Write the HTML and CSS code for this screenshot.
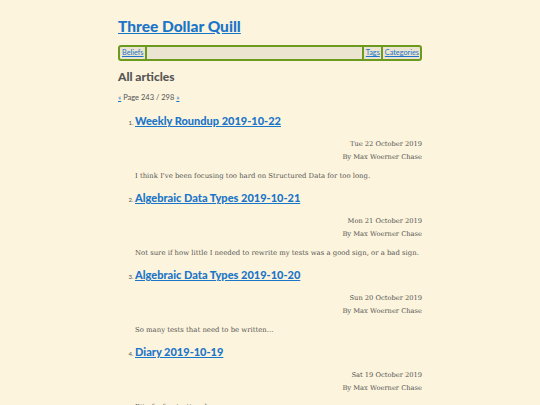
FILE: index.html
```
<!DOCTYPE html>
<html>
<head>
<meta charset="utf-8">
<link rel="stylesheet" href="styles.css">
</head>
<body>
<div class="page">
  <h1 class="site-title"><a href="#">Three Dollar Quill</a></h1>
  <nav class="nav">
    <div class="nav-left"><a href="#" class="nav-item sep-right">Beliefs</a></div>
    <div class="nav-right"><a href="#" class="nav-item sep-left">Tags</a><a href="#" class="nav-item sep-left">Categories</a></div>
  </nav>
  <h2 class="section-title">All articles</h2>
  <p class="pager"><a href="#">«</a> Page 243 / 298 <a href="#">»</a></p>
  <ol class="articles" start="1">
    <li class="article">
      <h3 class="article-title"><a href="#">Weekly Roundup 2019-10-22</a></h3>
      <div class="meta"><div>Tue 22 October 2019</div><div>By Max Woerner Chase</div></div>
      <p class="summary">I think I've been focusing too hard on Structured Data for too long.</p>
    </li>
    <li class="article">
      <h3 class="article-title"><a href="#">Algebraic Data Types 2019-10-21</a></h3>
      <div class="meta"><div>Mon 21 October 2019</div><div>By Max Woerner Chase</div></div>
      <p class="summary">Not sure if how little I needed to rewrite my tests was a good sign, or a bad sign.</p>
    </li>
    <li class="article">
      <h3 class="article-title"><a href="#">Algebraic Data Types 2019-10-20</a></h3>
      <div class="meta"><div>Sun 20 October 2019</div><div>By Max Woerner Chase</div></div>
      <p class="summary">So many tests that need to be written...</p>
    </li>
    <li class="article">
      <h3 class="article-title"><a href="#">Diary 2019-10-19</a></h3>
      <div class="meta"><div>Sat 19 October 2019</div><div>By Max Woerner Chase</div></div>
      <p class="summary">Bit of a frustrating day.</p>
    </li>
  </ol>
</div>
</body>
</html>
```
FILE: styles.css
```
html, body {
  margin: 0;
  padding: 0;
  background: #fcf4dc;
}
body {
  color: #555555;
  font-family: "DejaVu Serif", serif;
}
a {
  color: #1b75c9;
}
.page {
  width: 304px;
  margin: 0 auto;
  padding-top: 14px;
}
.site-title {
  margin: 0;
  font-family: Lato, "Open Sans", sans-serif;
  font-weight: 900;
  font-size: 15.5px;
  line-height: 24px;
}
.nav {
  margin-top: 7px;
  display: flex;
  justify-content: space-between;
  background: #ebe4d0;
  border: 2px solid #6b9a1f;
  border-radius: 3px;
  height: 12px;
  align-items: stretch;
  font-family: Lato, sans-serif;
  font-size: 7.3px;
  line-height: 12px;
}
.nav-left, .nav-right {
  display: flex;
}
.nav-item {
  padding: 0 1px 0 2px;
}
.sep-right {
  border-right: 2px solid #6b9a1f;
}
.sep-left {
  border-left: 2px solid #6b9a1f;
}
.section-title {
  margin: 8px 0 0;
  font-family: Lato, sans-serif;
  font-size: 12px;
  line-height: 16px;
  font-weight: 900;
}
.pager {
  margin: 8px 0 0;
  font-family: Lato, sans-serif;
  font-size: 7.5px;
  line-height: 10px;
}
.articles {
  margin: 8px 0 0;
  padding-left: 17px;
  list-style-position: outside;
}
.article {
  font-family: Lato, sans-serif;
  font-size: 6px;
}
.article-title {
  margin: 0;
  font-size: 11px;
  line-height: 20px;
  font-weight: 900;
  font-family: Lato, sans-serif;
}
.meta {
  margin-top: 7px;
  text-align: right;
  font-family: "DejaVu Serif", serif;
  font-size: 6.7px;
  line-height: 12.5px;
}
.summary {
  margin: 7px 0 6px;
  font-family: "DejaVu Serif", serif;
  font-size: 6.9px;
  line-height: 12px;
}
```
